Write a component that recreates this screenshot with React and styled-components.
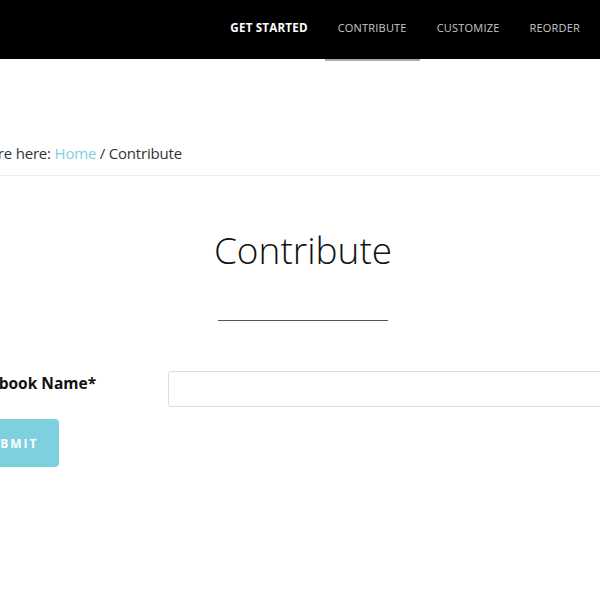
import React from "react";
import styled, { createGlobalStyle } from "styled-components";

const GlobalStyle = createGlobalStyle`
  html, body {
    margin: 0;
    padding: 0;
    overflow-x: hidden;
    background: #fff;
    font-family: "Open Sans", "Liberation Sans", sans-serif;
    color: #222;
  }
`;

const Header = styled.header`
  height: 59px;
  background: #000;
  display: flex;
  justify-content: flex-end;
  padding-right: 5px;
`;
const Nav = styled.nav`
  display: flex;
  align-items: stretch;
`;
const NavItem = styled.a`
  display: flex;
  align-items: center;
  padding: 0 0 5px;
  margin: 0 15px;
  font-size: ${props => (props.strong ? "11.6px" : "11px")};
  letter-spacing: 0.2px;
  text-transform: uppercase;
  color: ${props => (props.strong ? "#fff" : "#c9c9c9")};
  font-weight: ${props => (props.strong ? 700 : 400)};
  position: relative;

  &::after {
    content: "";
    display: ${props => (props.active ? "block" : "none")};
    position: absolute;
    left: -13px;
    right: -13px;
    bottom: -2px;
    height: 2px;
    background: #a9a9a9;
  }
`;

const Main = styled.main`
  margin-left: -40px;
  width: 686px;
`;
const Breadcrumb = styled.div`
  margin-top: 84px;
  padding-bottom: 12px;
  font-size: 15px;
  color: #333;
  border-bottom: 1px solid #eee;
  margin-right: -200px;
  letter-spacing: -0.2px;

  a {
    color: #7ecfe0;
    text-decoration: none;
  }
`;
const Title = styled.h1`
  margin: 48px 0 0;
  text-align: center;
  font-size: 37px;
  font-weight: 300;
  color: #111;
  line-height: 52px;
`;
const Rule = styled.div`
  width: 170px;
  height: 1px;
  background: #555;
  margin: 44px auto 0;
`;
const Form = styled.form`
  margin-top: 50px;
  display: flex;
  flex-direction: column;
  gap: 12px;
`;
const Row = styled.div`
  display: grid;
  grid-template-columns: 208px 1fr;
  align-items: start;
`;
const Label = styled.label`
  padding-top: 1px;
  font-size: 15.5px;
  line-height: 22px;
  font-weight: 700;
  color: #111;
`;
const Input = styled.input`
  height: 36px;
  box-sizing: border-box;
  border: 1px solid #ddd;
  border-radius: 3px;
  width: 600px;
`;
const Button = styled.button`
  align-self: flex-start;
  width: 99px;
  height: 48px;
  border: none;
  border-radius: 4px;
  background: #7ecfe0;
  color: #fff;
  font-family: inherit;
  font-size: 12px;
  font-weight: 700;
  letter-spacing: 2px;
`;

const App = () => (
  <>
    <GlobalStyle />
    <Header>
      <Nav>
        <NavItem strong>Get Started</NavItem>
        <NavItem active>Contribute</NavItem>
        <NavItem>Customize</NavItem>
        <NavItem>Reorder</NavItem>
      </Nav>
    </Header>
    <Main>
      <Breadcrumb>
        You are here: <a href="#">Home</a> / Contribute
      </Breadcrumb>
      <Title>Contribute</Title>
      <Rule />
      <Form>
        <Row>
          <Label>Cookbook Name*</Label>
          <Input type="text" />
        </Row>
        <Button type="button">SUBMIT</Button>
      </Form>
    </Main>
  </>
);

export default App;
